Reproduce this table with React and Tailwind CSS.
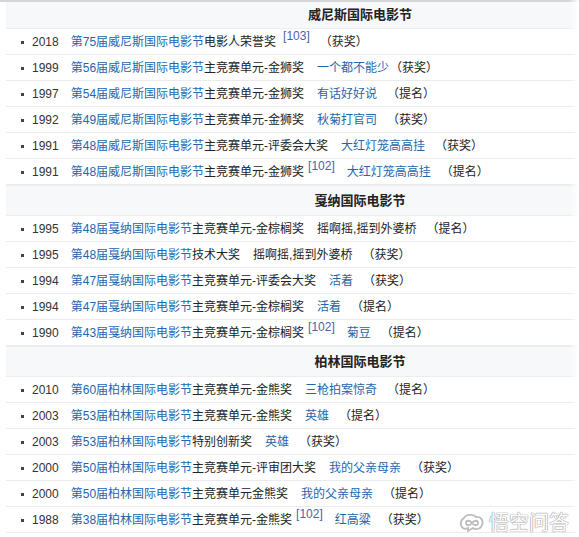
const sections = [
  {
    title: "威尼斯国际电影节",
    first: true,
    items: [
      { year: "2018", fest: "第75届威尼斯国际电影节", award: "电影人荣誉奖", sup: "[103]", status: "（获奖）", supGap: "ml-[7px]" },
      { year: "1999", fest: "第56届威尼斯国际电影节", award: "主竞赛单元-金狮奖", film: "一个都不能少", link: true, status: "（获奖）", tight: true },
      { year: "1997", fest: "第54届威尼斯国际电影节", award: "主竞赛单元-金狮奖", film: "有话好好说", link: true, status: "（提名）" },
      { year: "1992", fest: "第49届威尼斯国际电影节", award: "主竞赛单元-金狮奖", film: "秋菊打官司", link: true, status: "（获奖）" },
      { year: "1991", fest: "第48届威尼斯国际电影节", award: "主竞赛单元-评委会大奖", film: "大红灯笼高高挂", link: true, status: "（获奖）" },
      { year: "1991", fest: "第48届威尼斯国际电影节", award: "主竞赛单元-金狮奖", sup: "[102]", film: "大红灯笼高高挂", link: true, status: "（提名）" }
    ]
  },
  {
    title: "戛纳国际电影节",
    items: [
      { year: "1995", fest: "第48届戛纳国际电影节", award: "主竞赛单元-金棕榈奖", film: "摇啊摇,摇到外婆桥", status: "（提名）" },
      { year: "1995", fest: "第48届戛纳国际电影节", award: "技术大奖", film: "摇啊摇,摇到外婆桥", status: "（获奖）" },
      { year: "1994", fest: "第47届戛纳国际电影节", award: "主竞赛单元-评委会大奖", film: "活着", link: true, status: "（获奖）" },
      { year: "1994", fest: "第47届戛纳国际电影节", award: "主竞赛单元-金棕榈奖", film: "活着", link: true, status: "（提名）" },
      { year: "1990", fest: "第43届戛纳国际电影节", award: "主竞赛单元-金棕榈奖", sup: "[102]", film: "菊豆", link: true, status: "（提名）" }
    ]
  },
  {
    title: "柏林国际电影节",
    items: [
      { year: "2010", fest: "第60届柏林国际电影节", award: "主竞赛单元-金熊奖", film: "三枪拍案惊奇", link: true, status: "（提名）" },
      { year: "2003", fest: "第53届柏林国际电影节", award: "主竞赛单元-金熊奖", film: "英雄", link: true, status: "（提名）" },
      { year: "2003", fest: "第53届柏林国际电影节", award: "特别创新奖", film: "英雄", link: true, status: "（获奖）" },
      { year: "2000", fest: "第50届柏林国际电影节", award: "主竞赛单元-评审团大奖", film: "我的父亲母亲", link: true, status: "（获奖）" },
      { year: "2000", fest: "第50届柏林国际电影节", award: "主竞赛单元金熊奖", film: "我的父亲母亲", link: true, status: "（提名）" },
      { year: "1988", fest: "第38届柏林国际电影节", award: "主竞赛单元-金熊奖", sup: "[102]", film: "红高粱", link: true, status: "（获奖）" }
    ]
  }
];

function AwardRow({ item }) {
  return (
    <div className="flex h-[26px] items-center whitespace-nowrap border-b border-[#ebebeb] pl-[15px] pt-px text-[12px] text-[#333]">
      <span className="h-[3px] w-[3px] bg-[#444]" />
      <span className="ml-[8px]">{item.year}</span>
      <span className="ml-[12px] text-[#2466ad]">{item.fest}</span>
      <span className="text-[#222]">{item.award}</span>
      {item.sup && (
        <span className={`${item.supGap || "ml-[4px]"} -translate-y-[6px] text-[12px] text-[#4a64a8]`}>{item.sup}</span>
      )}
      {item.film && (
        <span className={`${item.sup ? "ml-[12px]" : "ml-[13px]"} ${item.link ? "text-[#2466ad]" : "text-[#222]"}`}>
          {item.film}
        </span>
      )}
      <span className={`${item.tight ? "ml-[1px]" : "ml-[10px]"} text-[#222]`}>{item.status}</span>
    </div>
  );
}

function Watermark() {
  return (
    <div className="pointer-events-none absolute bottom-[4px] right-[10px] flex items-center gap-[4px]">
      <svg width="26" height="20" viewBox="0 0 26 20" fill="none" stroke="#bdbdbd" strokeWidth="1.8">
        <path d="M4 15 C1 13 1 7 5 5 C7 1 15 1 17 4 C22 3 25 8 23 12 C22 16 17 17 14 15 L9 18 L9 15 C7 16 5 16 4 15 Z" fill="#ffffff" />
        <path d="M7 10 C7 7 11 7 13 10 C15 13 19 13 19 10 C19 7 15 7 13 10 C11 13 7 13 7 10 Z" />
      </svg>
      <span className="text-[20px] leading-none text-white [text-shadow:0_0_1px_#999,0_0_1px_#999,0_0_1px_#999]">悟空问答</span>
    </div>
  );
}

export default function App() {
  return (
    <div className="relative h-[537px] w-[579px] overflow-hidden bg-white font-['Liberation_Sans','Noto_Sans_CJK_SC',sans-serif]">
      <div className="h-[2px] bg-[#d6d6d6]" />
      <div className="ml-[6px] w-[708px]">
        {sections.map((s) => (
          <div key={s.title}>
            <div
              className={`flex items-center justify-center bg-[#f7f8f9] text-[13px] font-bold text-[#222] ${
                s.first ? "h-[27px]" : "h-[31px] border-t border-[#e4e4e4]"
              } border-b border-[#ededed]`}
            >
              {s.title}
            </div>
            {s.items.map((item, i) => (
              <AwardRow key={i} item={item} />
            ))}
          </div>
        ))}
      </div>
      <div className="pointer-events-none absolute right-0 top-0 h-full w-[10px] bg-gradient-to-r from-transparent to-white" />
      <Watermark />
    </div>
  );
}
